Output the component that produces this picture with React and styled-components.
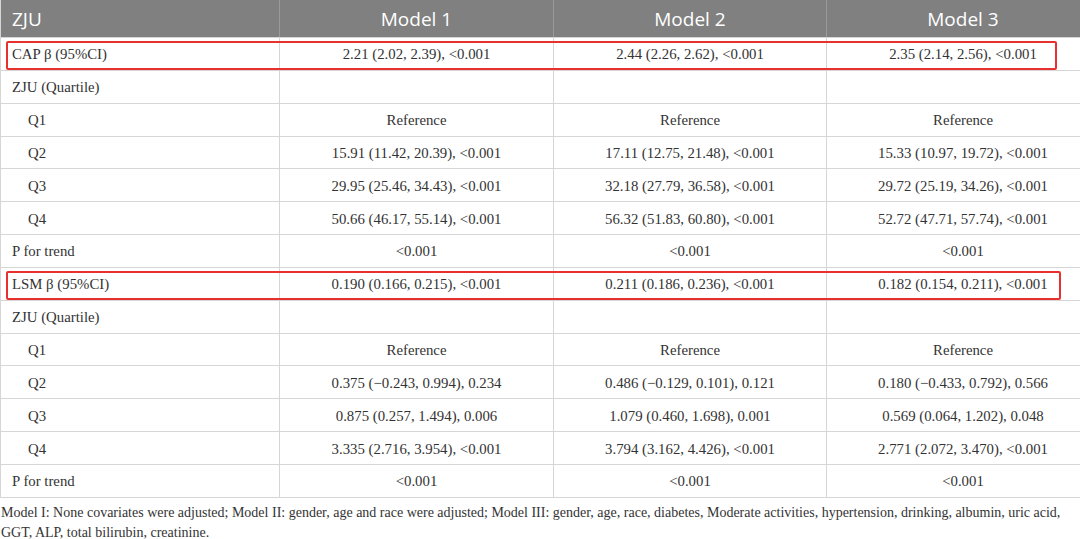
import React from 'react';
import styled, { createGlobalStyle } from 'styled-components';

const Global = createGlobalStyle`
body{
margin:0;
background:#ffffff;
overflow-x:hidden;
}
`

const Page = styled.div`
width:1080px;
overflow-x:hidden;
font-family:"Liberation Serif", "Times New Roman", serif;
color:#333333;
`;

const Table = styled.div`
width:1099px;
display:flex;
flex-direction:column;
border-left:1px solid #d6d6d6;
border-bottom:1px solid #d6d6d6;
box-sizing:border-box;
`;

const Row = styled.div`
position:relative;
display:grid;
grid-template-columns:278px 274px 273px 1fr;
height:${props=>props.head ? '37px' : '32.85px'};
background:${props=>props.head ? '#808080' : '#ffffff'};
border-top:${props=>props.head ? 'none' : '1px solid #d6d6d6'};
box-sizing:border-box;
&::after{
content:'';
display:${props=>props.mark ? 'block' : 'none'};
position:absolute;
left:5px;
right:${props=>props.markRight || '42px'};
top:3px;
bottom:0px;
border:2px solid #e8302f;
border-radius:2px;
}
`;

const HeadCell = styled.div`
display:flex;
align-items:center;
justify-content:${props=>props.left ? 'flex-start' : 'center'};
padding-left:${props=>props.left ? '11px' : '0'};
font-family:"Open Sans", "Noto Sans", sans-serif;
font-size:19px;
color:#ffffff;
border-left:${props=>props.first ? 'none' : '1px solid #9a9a9a'};
`;

const Cell = styled.div`
display:flex;
align-items:center;
justify-content:${props=>props.left ? 'flex-start' : 'center'};
padding-left:${props=>props.left ? (props.indent ? '27px' : '11px') : '0'};
padding-top:2px;
font-size:14.8px;
border-left:${props=>props.first ? 'none' : '1px solid #d6d6d6'};
white-space:nowrap;
`;

const Note = styled.p`
margin:5px 0 0 1px;
font-size:14px;
line-height:20px;
color:#333333;
`;

const rows = [
    {label:"CAP β (95%CI)", vals:["2.21 (2.02, 2.39), <0.001","2.44 (2.26, 2.62), <0.001","2.35 (2.14, 2.56), <0.001"], mark:true, markRight:'42px'},
    {label:"ZJU (Quartile)", vals:["","",""]},
    {label:"Q1", indent:true, vals:["Reference","Reference","Reference"]},
    {label:"Q2", indent:true, vals:["15.91 (11.42, 20.39), <0.001","17.11 (12.75, 21.48), <0.001","15.33 (10.97, 19.72), <0.001"]},
    {label:"Q3", indent:true, vals:["29.95 (25.46, 34.43), <0.001","32.18 (27.79, 36.58), <0.001","29.72 (25.19, 34.26), <0.001"]},
    {label:"Q4", indent:true, vals:["50.66 (46.17, 55.14), <0.001","56.32 (51.83, 60.80), <0.001","52.72 (47.71, 57.74), <0.001"]},
    {label:"P for trend", vals:["<0.001","<0.001","<0.001"]},
    {label:"LSM β (95%CI)", vals:["0.190 (0.166, 0.215), <0.001","0.211 (0.186, 0.236), <0.001","0.182 (0.154, 0.211), <0.001"], mark:true, markRight:'38px'},
    {label:"ZJU (Quartile)", vals:["","",""]},
    {label:"Q1", indent:true, vals:["Reference","Reference","Reference"]},
    {label:"Q2", indent:true, vals:["0.375 (−0.243, 0.994), 0.234","0.486 (−0.129, 0.101), 0.121","0.180 (−0.433, 0.792), 0.566"]},
    {label:"Q3", indent:true, vals:["0.875 (0.257, 1.494), 0.006","1.079 (0.460, 1.698), 0.001","0.569 (0.064, 1.202), 0.048"]},
    {label:"Q4", indent:true, vals:["3.335 (2.716, 3.954), <0.001","3.794 (3.162, 4.426), <0.001","2.771 (2.072, 3.470), <0.001"]},
    {label:"P for trend", vals:["<0.001","<0.001","<0.001"]}
]

const App = () => {
    return(
        <Page>
            <Global/>
            <Table>
                <Row head>
                    <HeadCell first left>ZJU</HeadCell>
                    <HeadCell>Model 1</HeadCell>
                    <HeadCell>Model 2</HeadCell>
                    <HeadCell>Model 3</HeadCell>
                </Row>
                {rows.map((r,i)=>
                <Row key={i} mark={r.mark} markRight={r.markRight}>
                    <Cell first left indent={r.indent}>{r.label}</Cell>
                    {r.vals.map((v,j)=><Cell key={j}>{v}</Cell>)}
                </Row>)}
            </Table>
            <Note>
                Model I: None covariates were adjusted; Model II: gender, age and race were adjusted; Model III: gender, age, race, diabetes, Moderate activities, hypertension, drinking, albumin, uric acid, GGT, ALP, total bilirubin, creatinine.
            </Note>
        </Page>
    )
}

export default App;
